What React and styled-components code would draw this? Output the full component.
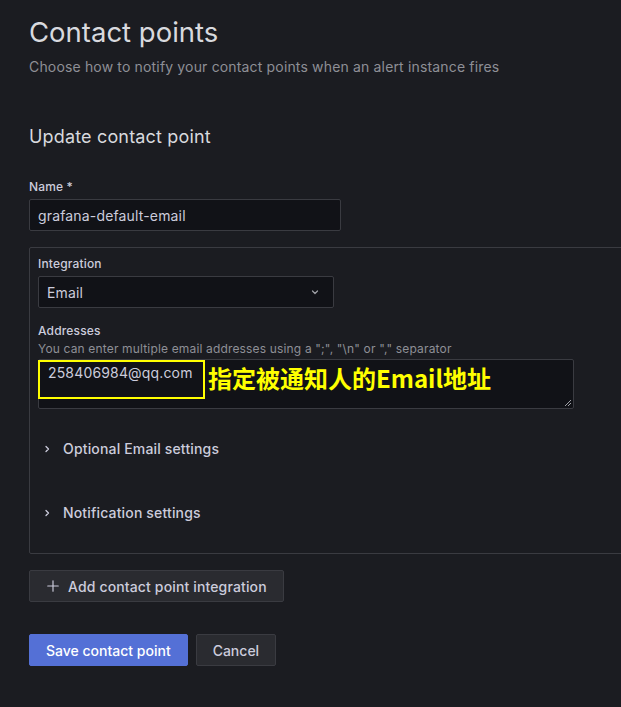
import styled, { createGlobalStyle } from "styled-components";

const GlobalStyle = createGlobalStyle`
  html, body {
    margin: 0;
    padding: 0;
    background: #1b1c21;
    overflow: hidden;
  }
  * { box-sizing: border-box; }
`;

function ChevronDown() {
  return (
    <svg width="12" height="12" viewBox="0 0 24 24" fill="none" stroke="#9fa0a6" strokeWidth="2.5" strokeLinecap="round" strokeLinejoin="round">
      <path d="M7 10l5 5 5-5" />
    </svg>
  );
}

function ChevronRight() {
  return (
    <svg width="12" height="12" viewBox="0 0 24 24" fill="none" stroke="#ccccdc" strokeWidth="2.5" strokeLinecap="round" strokeLinejoin="round">
      <path d="M10 7l5 5-5 5" />
    </svg>
  );
}

function Plus() {
  return (
    <svg width="14" height="14" viewBox="0 0 24 24" fill="none" stroke="#ccccdc" strokeWidth="2" strokeLinecap="round">
      <path d="M12 3v18M3 12h18" />
    </svg>
  );
}

export default function App() {
  return (
    <Page>
      <GlobalStyle />
      {/* Header */}
      <Title>Contact points</Title>
      <Subtitle>Choose how to notify your contact points when an alert instance fires</Subtitle>

      <SectionTitle>Update contact point</SectionTitle>

      <Label $top={30}>Name *</Label>
      <Input width={312}>grafana-default-email</Input>

      {/* Integration box */}
      <IntegrationBox>
        <Label>Integration</Label>
        <Input width={296}>
          <span>Email</span>
          <ChevronDown />
        </Input>

        <Label $top={15}>Addresses</Label>
        <Description>You can enter multiple email addresses using a ";", "\n" or "," separator</Description>
        <TextArea>
          <Highlight>258406984@qq.com</Highlight>
          <Annotation>指定被通知人的Email地址</Annotation>
          <Resize viewBox="0 0 8 8">
            <path d="M7 1L1 7M7 4L4 7" stroke="#9fa0a6" strokeWidth="1" />
          </Resize>
        </TextArea>

        <Collapse $top={30}>
          <ChevronRight />
          Optional Email settings
        </Collapse>
        <Collapse $top={44}>
          <ChevronRight />
          Notification settings
        </Collapse>
      </IntegrationBox>

      <Button $top={16}>
        <Plus />
        Add contact point integration
      </Button>

      <Actions>
        <Button $primary>Save contact point</Button>
        <Button>Cancel</Button>
      </Actions>
    </Page>
  );
}

const Page = styled.div`
  min-height: 707px;
  padding: 14px 0 0 29px;
  font-family: Inter, "Noto Sans", sans-serif;
  letter-spacing: 0.01em;
  color: #ccccdc;
`;

const Title = styled.h1`
  margin: 0;
  font-size: 27.5px;
  font-weight: 400;
  letter-spacing: 0;
  line-height: 36px;
  color: #d8d9de;
`;

const Subtitle = styled.div`
  margin-top: 7px;
  font-size: 14px;
  line-height: 20px;
  color: #8e8f96;
`;

const SectionTitle = styled.h2`
  margin: 48px 0 0;
  font-size: 18px;
  font-weight: 400;
  line-height: 24px;
  color: #d8d9de;
`;

const Label = styled.div`
  margin-top: ${({ $top }) => $top ?? 0}px;
  font-size: 12px;
  font-weight: 500;
  line-height: 16px;
  color: #ccccdc;
`;

const Input = styled.div`
  margin-top: 4px;
  width: ${({ width }) => width}px;
  height: 32px;
  padding: 0 8px;
  display: flex;
  align-items: center;
  justify-content: space-between;
  background: #111217;
  border: 1px solid #3a3b41;
  border-radius: 2px;
  font-size: 14px;
  color: #ccccdc;
  svg { margin-right: 4px; }
`;

const IntegrationBox = styled.section`
  margin-top: 16px;
  width: 640px;
  height: 307px;
  padding: 8px 8px 0;
  border: 1px solid #3a3b41;
  border-radius: 2px;
`;

const Description = styled.div`
  margin-top: 2px;
  font-size: 12px;
  line-height: 16px;
  color: #8e8f96;
`;

const TextArea = styled.div`
  position: relative;
  margin-top: 2px;
  width: 536px;
  height: 50px;
  display: flex;
  align-items: flex-start;
  background: #111217;
  border: 1px solid #3a3b41;
  border-radius: 2px;
`;

const Highlight = styled.div`
  margin-left: -1px;
  width: 167px;
  height: 39px;
  padding: 2px 0 0 8px;
  border: 2px solid #ffff00;
  font-size: 14px;
  line-height: 18px;
  color: #ccccdc;
`;

const Annotation = styled.div`
  margin: 4px 0 0 3px;
  font-family: "Noto Sans CJK SC", "Noto Sans", sans-serif;
  font-size: 24px;
  font-weight: 700;
  line-height: 28px;
  letter-spacing: 0;
  color: #ffff00;
`;

const Resize = styled.svg`
  position: absolute;
  right: 1px;
  bottom: 1px;
  width: 8px;
  height: 8px;
`;

const Collapse = styled.div`
  margin-top: ${({ $top }) => $top}px;
  display: flex;
  align-items: center;
  gap: 10px;
  padding-left: 3px;
  font-size: 14px;
  font-weight: 500;
  line-height: 20px;
  color: #ccccdc;
`;

const Button = styled.button`
  margin-top: ${({ $top }) => $top ?? 0}px;
  height: 32px;
  padding: 0 16px;
  display: inline-flex;
  align-items: center;
  gap: 8px;
  font-family: Inter, "Noto Sans", sans-serif;
  font-size: 14px;
  font-weight: 500;
  letter-spacing: 0.01em;
  color: ${({ $primary }) => ($primary ? "#ffffff" : "#ccccdc")};
  background: ${({ $primary }) => ($primary ? "#5470d6" : "#2a2b30")};
  border: 1px solid ${({ $primary }) => ($primary ? "#5470d6" : "#3a3b41")};
  border-radius: 2px;
`;

const Actions = styled.div`
  margin-top: 32px;
  display: flex;
  gap: 8px;

  ${Button} {
    letter-spacing: 0;
  }
`;
